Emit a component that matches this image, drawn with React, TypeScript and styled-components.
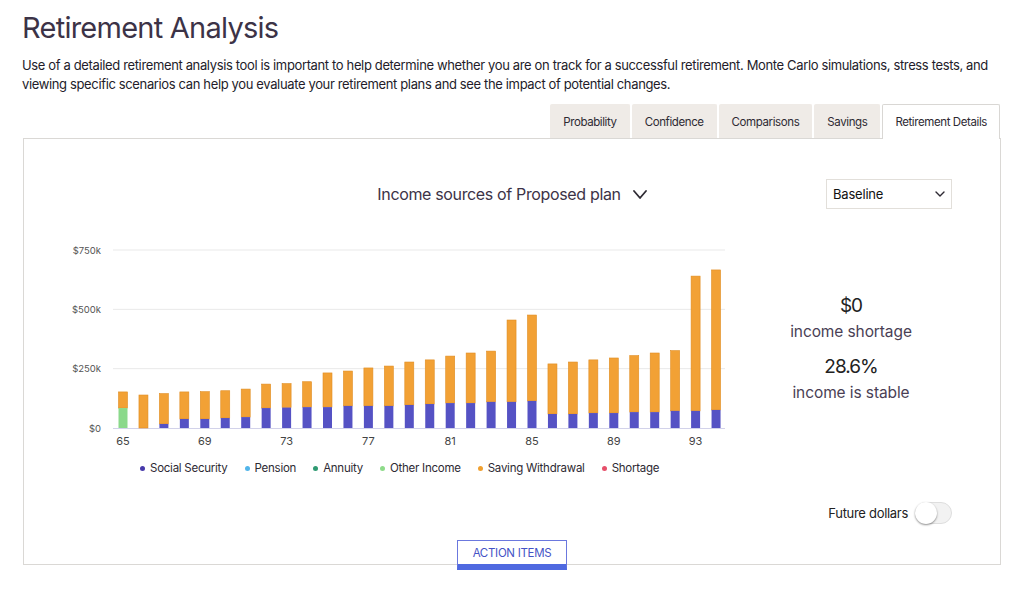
import styled, { createGlobalStyle } from "styled-components";

const GlobalStyle = createGlobalStyle`
  body {
    margin: 0;
    background: #fff;
    font-family: Inter, "Noto Sans", sans-serif;
    color: #2a2330;
  }
`;

const Page = styled.div`
  padding: 0 23px 29px;
`;

const Title = styled.h1`
  margin: 10px 0 0 -1px;
  font-size: 29px;
  line-height: 36px;
  font-weight: 400;
  letter-spacing: -0.75px;
  color: #3c3347;
`;

const Intro = styled.p`
  margin: 10px 0 0 -1px;
  font-size: 13px;
  line-height: 19px;
  letter-spacing: -0.36px;
  color: #231c2a;
`;

const TabBar = styled.div`
  display: flex;
  justify-content: flex-end;
  align-items: flex-end;
  gap: 2px;
  margin-top: 10px;
  padding-right: 1px;
`;

const Tab = styled.button<{ $active?: boolean }>`
  height: ${({ $active }) => ($active ? "35px" : "34px")};
  margin-bottom: ${({ $active }) => ($active ? "-1px" : "0")};
  padding: 0 12px;
  border: 1px solid ${({ $active }) => ($active ? "#d9d7d4" : "#efebe7")};
  border-bottom: none;
  border-radius: 2px 2px 0 0;
  background: ${({ $active }) => ($active ? "#fff" : "#efebe7")};
  font-family: inherit;
  font-size: 11.5px;
  letter-spacing: -0.4px;
  color: #2e2a33;
`;

const Panel = styled.section`
  display: flex;
  flex-direction: column;
  border: 1px solid #dad8d5;
  padding: 40px 48px 0;
`;

const Header = styled.div`
  display: grid;
  grid-template-columns: 1fr auto 1fr;
  align-items: center;
  height: 30px;
`;

const ChartTitle = styled.div`
  grid-column: 2;
  display: flex;
  align-items: center;
  gap: 12px;
  font-size: 16px;
  letter-spacing: -0.35px;
  color: #3c3347;
`;

const Select = styled.div`
  justify-self: end;
  box-sizing: border-box;
  width: 126px;
  height: 30px;
  display: flex;
  align-items: center;
  justify-content: space-between;
  padding: 0 6px 0 6px;
  border: 1px solid #e2dfda;
  font-size: 13px;
  letter-spacing: -0.2px;
  color: #111;
`;

const Body = styled.div`
  display: flex;
  margin-top: 26px;
`;

const Stats = styled.div`
  flex: 1;
  margin-left: 8px;
  padding-top: 59px;
  text-align: center;
`;

const StatValue = styled.div<{ $first?: boolean }>`
  margin-top: ${({ $first }) => ($first ? "0" : "13px")};
  font-size: 19px;
  line-height: 24px;
  letter-spacing: -1px;
  color: #222;
`;

const StatLabel = styled.div`
  margin-top: 4px;
  font-size: 15.5px;
  line-height: 20px;
  letter-spacing: -0.1px;
  color: #4a3f55;
`;

const Legend = styled.div`
  display: flex;
  align-items: center;
  gap: 17px;
  height: 16px;
  margin-top: 10px;
  padding-left: 68px;
`;

const LegendItem = styled.div`
  display: flex;
  align-items: center;
  gap: 5px;
  font-size: 11.5px;
  letter-spacing: -0.25px;
  color: #2e2a33;
`;

const Dot = styled.span<{ $color: string }>`
  width: 5px;
  height: 5px;
  border-radius: 50%;
  background: ${({ $color }) => $color};
`;

const Footer = styled.div`
  display: flex;
  justify-content: flex-end;
  align-items: center;
  gap: 7px;
  height: 23px;
  margin-top: 25px;
  font-size: 13px;
  letter-spacing: -0.3px;
  color: #222;
`;

const Toggle = styled.div`
  box-sizing: border-box;
  width: 37px;
  height: 22px;
  display: flex;
  align-items: center;
  border: 1px solid #dedede;
  border-radius: 11px;
  background: #f2f2f2;
`;

const Knob = styled.span`
  width: 22px;
  height: 22px;
  margin-left: -1px;
  border-radius: 50%;
  background: #fff;
  box-shadow: 0 1px 2px rgba(0, 0, 0, 0.45);
`;

const ActionButton = styled.button`
  align-self: center;
  box-sizing: border-box;
  width: 110px;
  height: 30px;
  margin: 16px 0 -6px;
  padding: 0;
  background: #fff;
  border: 1px solid #6b78de;
  border-bottom: 6px solid #4f69e0;
  font-family: inherit;
  font-size: 11.5px;
  letter-spacing: -0.3px;
  color: #4553c6;
`;

const Chevron = ({ w, h, sw }: { w: number; h: number; sw: number }) => (
  <svg width={w} height={h} viewBox={`0 0 ${w} ${h}`}>
    <path
      d={`M1 1 L${w / 2} ${h - 1} L${w - 1} 1`}
      fill="none"
      stroke="#2e2a33"
      strokeWidth={sw}
      strokeLinecap="round"
      strokeLinejoin="round"
    />
  </svg>
);

// [total, social security, other income] in $k, ages 65..94
const data: [number, number, number][] = [
  [152, 0, 84], [139, 0, 0], [145, 17, 0], [152, 38, 0], [153, 38, 0],
  [157, 42, 0], [164, 46, 0], [185, 84, 0], [187, 86, 0], [195, 88, 0],
  [232, 88, 0], [240, 93, 0], [253, 93, 0], [261, 93, 0], [278, 97, 0],
  [287, 101, 0], [303, 105, 0], [316, 105, 0], [324, 110, 0], [455, 110, 0],
  [476, 114, 0], [270, 59, 0], [278, 59, 0], [287, 63, 0], [295, 63, 0],
  [305, 67, 0], [316, 67, 0], [326, 72, 0], [640, 72, 0], [666, 76, 0],
];

const yOf = (k: number) => 193 - (k * 178) / 750;
const xOf = (i: number) => 51 + i * 20.45;

function IncomeChart() {
  return (
    <svg width={670} height={215} viewBox="0 0 670 215">
      {[250, 500, 750].map((k) => (
        <line key={k} x1={41} x2={653} y1={yOf(k)} y2={yOf(k)} stroke="#e9e9e9" />
      ))}
      <line x1={41} x2={653} y1={193.5} y2={193.5} stroke="#d2d2ea" />
      {[0, 250, 500, 750].map((k) => (
        <text
          key={k}
          x={29}
          y={yOf(k)}
          textAnchor="end"
          dominantBaseline="central"
          fontSize={9.5}
          fill="#555"
          fontFamily="Inter, sans-serif"
        >
          {k === 0 ? "$0" : `$${k}k`}
        </text>
      ))}
      {data.map(([total, ss, other], i) => {
        const x = xOf(i) - 4.5;
        const base = ss + other;
        return (
          <g key={i}>
            <rect
              x={x}
              y={yOf(total)}
              width={9}
              height={yOf(base) - yOf(total)}
              fill="#f2a135"
              stroke="#e08d22"
              strokeWidth={0.6}
            />
            {ss > 0 && (
              <rect x={x} y={yOf(ss)} width={9} height={193 - yOf(ss)} fill="#5552c4" />
            )}
            {other > 0 && (
              <rect x={x} y={yOf(other)} width={9} height={193 - yOf(other)} fill="#8bd98b" />
            )}
          </g>
        );
      })}
      {data.map((_, i) =>
        i % 4 === 0 ? (
          <text
            key={i}
            x={xOf(i)}
            y={206}
            textAnchor="middle"
            dominantBaseline="central"
            fontSize={11}
            fill="#444"
            fontFamily="Inter, sans-serif"
          >
            {65 + i}
          </text>
        ) : null
      )}
    </svg>
  );
}

const legend = [
  { label: "Social Security", color: "#4739aa" },
  { label: "Pension", color: "#52b5ea" },
  { label: "Annuity", color: "#2f9a72" },
  { label: "Other Income", color: "#8edb8a" },
  { label: "Saving Withdrawal", color: "#f0a030" },
  { label: "Shortage", color: "#e6506a" },
];

const tabs = ["Probability", "Confidence", "Comparisons", "Savings", "Retirement Details"];

export default function App() {
  return (
    <Page>
      <GlobalStyle />
      <Title>Retirement Analysis</Title>
      <Intro>
        Use of a detailed retirement analysis tool is important to help determine whether you are on
        track for a successful retirement. Monte Carlo simulations, stress tests, and viewing specific
        scenarios can help you evaluate your retirement plans and see the impact of potential changes.
      </Intro>
      <TabBar>
        {tabs.map((t) => (
          <Tab key={t} $active={t === "Retirement Details"}>
            {t}
          </Tab>
        ))}
      </TabBar>
      <Panel>
        <Header>
          <ChartTitle>
            Income sources of Proposed plan
            <Chevron w={14} h={9} sw={1.8} />
          </ChartTitle>
          <Select>
            Baseline
            <Chevron w={10} h={6} sw={1.4} />
          </Select>
        </Header>
        <Body>
          <IncomeChart />
          <Stats>
            <StatValue $first>$0</StatValue>
            <StatLabel>income shortage</StatLabel>
            <StatValue>28.6%</StatValue>
            <StatLabel>income is stable</StatLabel>
          </Stats>
        </Body>
        <Legend>
          {legend.map((l) => (
            <LegendItem key={l.label}>
              <Dot $color={l.color} />
              {l.label}
            </LegendItem>
          ))}
        </Legend>
        <Footer>
          Future dollars
          <Toggle>
            <Knob />
          </Toggle>
        </Footer>
        <ActionButton>ACTION ITEMS</ActionButton>
      </Panel>
    </Page>
  );
}
